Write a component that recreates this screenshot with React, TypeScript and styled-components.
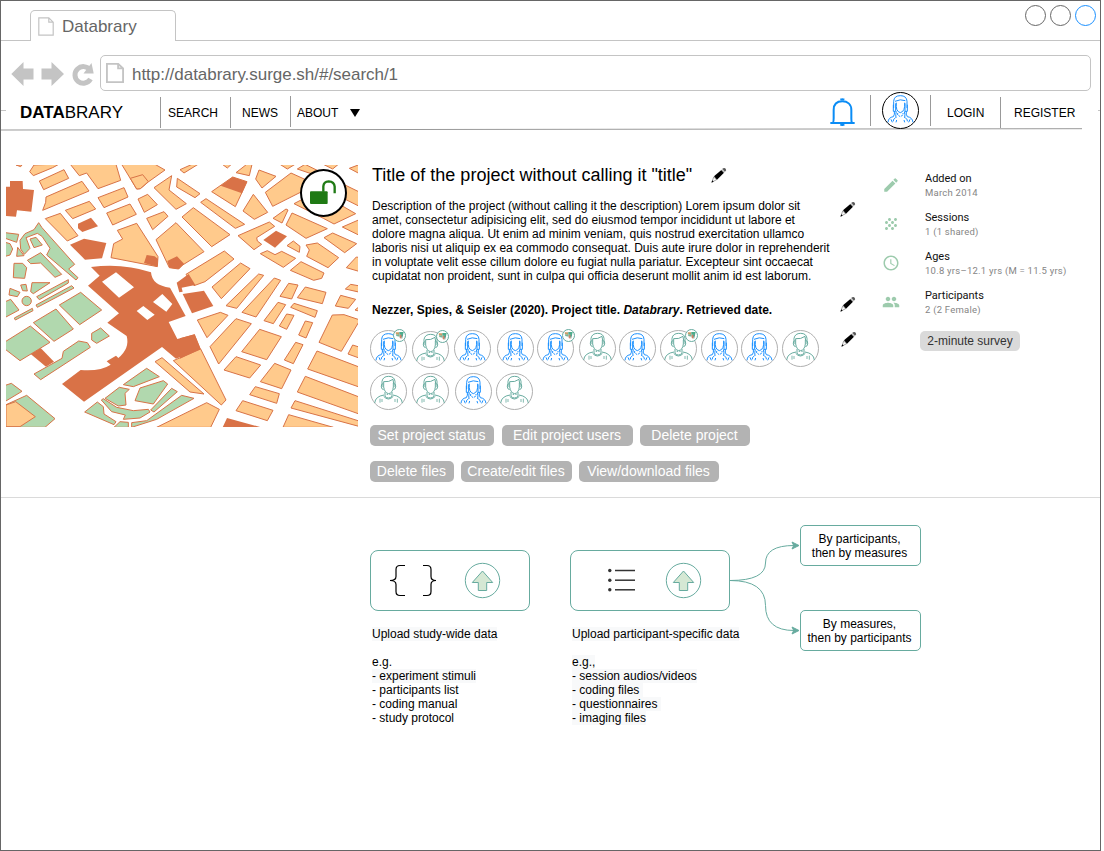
import React from 'react';
import styled, { createGlobalStyle } from 'styled-components';
import { MdAccessTime, MdEdit, MdGrain, MdPeople } from 'react-icons/md';

const GlobalStyle = createGlobalStyle`
  *, *::before, *::after { box-sizing: border-box; }
  body {
    margin: 0;
    background: #fff;
    color: #000;
    font-family: "Liberation Sans", Arial, Helvetica, sans-serif;
    font-size: 12px;
    line-height: 14px;
  }
  svg { display: block; flex: none; }
`;

const BLUE = '#1a90ff';
const TEAL = '#67ab9f';
const CHROME = '#c4c4c4';

/* ---------- browser frame ---------- */

const Frame = styled.div`
  width: 1101px;
  height: 851px;
  border: 1px solid #666;
  display: flex;
  flex-direction: column;
  overflow: hidden;
`;

const TabStrip = styled.div`
  height: 40px;
  flex: none;
  display: flex;
  justify-content: space-between;
  padding: 9px 4px 0 29px;
  border-bottom: 1px solid ${CHROME};
`;

const Tab = styled.div`
  width: 146px;
  height: 31px;
  padding: 1px 0 0 7px;
  display: flex;
  align-items: center;
  gap: 8px;
  border: 1px solid ${CHROME};
  border-bottom: 0;
  border-radius: 5px 5px 0 0;
  background: #fff;
  color: #666;
  font-size: 17px;
`;

const WindowButtons = styled.div`
  display: flex;
  gap: 4px;
  margin-top: -5px;
`;

const WindowButton = styled.span<{ $color: string }>`
  width: 21px;
  height: 21px;
  border: 1px solid ${(p) => p.$color};
  border-radius: 50%;
`;

const Toolbar = styled.div`
  height: 50px;
  flex: none;
  display: flex;
  align-items: center;
  padding: 14px 9px 0 10px;
`;

const AddressBar = styled.div`
  flex: 1;
  height: 36px;
  margin-left: 6px;
  padding-left: 5px;
  display: flex;
  align-items: center;
  gap: 8px;
  border: 1px solid ${CHROME};
  border-radius: 5px;
  color: #666;
  font-size: 17px;
  letter-spacing: -0.03px;
`;

const Address = styled.span`
  padding-top: 3px;
`;

/* ---------- site navigation ---------- */

const Nav = styled.nav`
  height: 37px;
  flex: none;
  display: flex;
  align-items: flex-start;
`;

const Tick = styled.span<{ $width: number }>`
  width: ${(p) => p.$width}px;
  height: 1px;
  margin-top: 19px;
  background: ${CHROME};
`;

const Brand = styled.div`
  width: 140px;
  margin: 12px 0 0 14px;
  font-size: 17px;
  line-height: 20px;
  white-space: nowrap;
`;

const NavItem = styled.a<{ $width: number; $pad: number; $top?: number }>`
  width: ${(p) => p.$width}px;
  height: 31px;
  margin-top: ${(p) => p.$top ?? 6}px;
  padding: ${(p) => 15 - (p.$top ?? 6)}px 0 0 ${(p) => p.$pad}px;
  display: flex;
  gap: 12px;
  border-left: 1px solid #999;
  line-height: 14px;
`;

const NavSpacer = styled.div`
  flex: 1;
`;

const IconSlot = styled.div<{ $width: number; $top: number; $pad: number; $divider?: boolean }>`
  width: ${(p) => p.$width}px;
  height: 31px;
  margin-top: 4px;
  padding: 0 0 0 ${(p) => p.$pad}px;
  border-left: ${(p) => (p.$divider ? '1px solid #999' : '0')};
  > svg, > span { margin-top: ${(p) => p.$top}px; }
`;

const Caret = styled.svg`
  margin-top: 3px;
`;

/* ---------- project summary ---------- */

const Project = styled.section`
  height: 367px;
  flex: none;
  display: grid;
  grid-template-columns: 352px 510px 1fr;
  padding-left: 5px;
  border-bottom: 1px solid #dadada;
`;

const MapPane = styled.div`
  position: relative;
  width: 352px;
  height: 262px;
  margin-top: 34px;
`;

const LockBadge = styled.div`
  position: absolute;
  left: 294px;
  top: 4px;
  width: 47px;
  height: 48px;
  border: 2px solid #000;
  border-radius: 50%;
  background: #fff;
`;

const Details = styled.div`
  padding: 34px 0 0 12px;
`;

const Line = styled.div<{ $height: number; $top?: number; $penTop: number; $text?: boolean }>`
  display: flex;
  justify-content: space-between;
  width: 486px;
  height: ${(p) => p.$height}px;
  margin-top: ${(p) => p.$top ?? 0}px;
  padding-left: ${(p) => (p.$text ? 2 : 0)}px;
  > svg { margin-top: ${(p) => p.$penTop}px; }
`;

const TitleLine = styled(Line)`
  width: 357px;
`;

const AvatarLine = styled(Line)`
  width: 487px;
`;

const Title = styled.h1`
  margin: 0;
  font-size: 18px;
  font-weight: 400;
  line-height: 20px;
  white-space: nowrap;
`;

const Copy = styled.p<{ $bold?: boolean }>`
  margin: 0;
  font-weight: ${(p) => (p.$bold ? 700 : 400)};
  white-space: pre;
`;

const AvatarRow = styled.div`
  display: flex;
`;

const AvatarRing = styled.span<{ $gap?: number; $drop?: number; $dark?: boolean }>`
  position: relative;
  display: block;
  width: 37px;
  height: 37px;
  margin-left: ${(p) => p.$gap ?? 0}px;
  top: ${(p) => p.$drop ?? 0}px;
  border: 1px solid ${(p) => (p.$dark ? '#000' : '#b0b0b0')};
  border-radius: 50%;
  background: #fff;
  > svg { margin: -1px; }
`;

const Flag = styled.span<{ $left: number }>`
  position: absolute;
  left: ${(p) => p.$left - 7.5}px;
  top: -2px;
  width: 13px;
  height: 13px;
  border: 1px solid ${TEAL};
  border-radius: 50%;
  background: #fff;
`;

const ButtonRow = styled.div<{ $top: number }>`
  display: flex;
  gap: 7px;
  margin-top: ${(p) => p.$top}px;
`;

const Button = styled.button<{ $width: number; $gap?: number }>`
  width: ${(p) => p.$width}px;
  height: 21px;
  margin: 0 ${(p) => p.$gap ?? 0}px 0 0;
  padding: 0 1px 0 0;
  border: 0;
  border-radius: 5px;
  background: #b3b3b3;
  color: #fff;
  font: 14px/21px "Liberation Sans", Arial, sans-serif;
  white-space: nowrap;
`;

const Facts = styled.div`
  padding: 40px 0 0 13px;
`;

const Fact = styled.div`
  display: grid;
  grid-template-columns: 44px 1fr;
  height: 39px;
  font-family: Roboto, sans-serif;
  > svg { width: 18px; height: 18px; margin: 5px 0 0 1px; color: #9dcbad; }
`;

const FactName = styled.div`
  color: #111;
  font-size: 11px;
  line-height: 15px;
  letter-spacing: -0.02px;
`;

const FactValue = styled.div`
  color: #858585;
  font-size: 9.5px;
  line-height: 14px;
  letter-spacing: 0.24px;
`;

const Survey = styled.button`
  width: 100px;
  height: 20px;
  margin: 4px 0 0 39px;
  padding: 0;
  border: 0;
  border-radius: 5px;
  background: #dadada;
  color: #333;
  font: 12px/20px "Liberation Sans", Arial, sans-serif;
  display: block;
`;

/* ---------- upload section ---------- */

const Uploads = styled.section`
  display: flex;
  padding: 27px 0 0 369px;
`;

const UploadColumn = styled.div<{ $gap?: number }>`
  width: 160px;
  margin: 25px ${(p) => p.$gap ?? 0}px 0 0;
`;

const UploadCard = styled.div`
  width: 160px;
  height: 61px;
  border: 1px solid ${TEAL};
  border-radius: 8px;
  > svg { margin: -1px; }
`;

const UploadCopy = styled.div`
  padding: 16px 0 0 2px;
  white-space: pre;
`;

const Mark = styled.span`
  background: #f8f9fa;
`;

const Choices = styled.div`
  display: flex;
  flex-direction: column;
  gap: 44px;
`;

const Choice = styled.div`
  width: 121px;
  height: 41px;
  padding: 6px 2px 0 0;
  border: 1px solid ${TEAL};
  border-radius: 5px;
  text-align: center;
  white-space: nowrap;
`;

/* ---------- drawings ---------- */

const PageIcon = ({ width, height, stroke }: { width: number; height: number; stroke: number }) => (
  <svg width={width} height={height} viewBox="0 0 16 19" preserveAspectRatio="none" fill="none" stroke={CHROME} strokeWidth={stroke}>
    <path d="M.8.8h10l4.4 4.4v13H.8z M10.8.8v4.4h4.4" />
  </svg>
);

const Pencil = () => (
  <svg width="16" height="16" viewBox="0 0 48 48">
    <path d="M8 30 3 45l14-7z" fill="#fff" stroke="#777" strokeWidth="2" />
    <path d="m4 40-3 7 7-3z" fill="#000" />
    <path d="M9 28 31 9l8 8-21 21z" fill="#000" />
    <path d="m31 9 3-3 8 8-3 3z" fill="#bbb" />
    <path d="M34 5q6-4 10 0t-2 9z" fill="#555" />
  </svg>
);

const Bell = () => (
  <svg width="25" height="28" viewBox="0 0 75 84" fill="none" stroke="#0a8cf5" strokeWidth="6">
    <path d="M9 73q2-2 2-12V36C11 18 22 10 37 10s27 8 27 26v26q0 10 2 12" />
    <path d="M1 75h73" strokeWidth="6" />
    <path d="M31 5q6-3 12 0M31 79q6 4 12 0" />
  </svg>
);

const WomanArt = () => (
  <svg width="37" height="37" viewBox="0 0 111 111" fill="none" stroke={BLUE} strokeWidth="3">
    <path d="M35 48V28q1-17 20-17t20 17v20" />
    <path d="M39 28q16-8 31-2" />
    <path d="M43 32q-3 26 12 30 15-4 13-30" />
    <path d="M34 38v20h7V34M76 38v20h-7V34" />
    <path d="M37 58q2 9-3 16M73 58q-2 9 3 16M43 58q-3 10-1 20M67 58q3 10 1 20" />
    <path d="M47 63v6l8 5 8-5v-6" strokeDasharray="6 3" />
    <path d="M34 74Q19 76 18 91M76 74q15 2 17 17" />
    <path d="M40 78q-8 4-6 10M70 78q8 4 6 10" />
    <path d="M27 82l4 9M44 84l-2 7M66 84l2 7M84 82l-4 9" />
  </svg>
);

const ManArt = () => (
  <svg width="37" height="37" viewBox="0 0 111 111" fill="none" stroke={TEAL} strokeWidth="3">
    <path d="M36 42V25Q39 10 56 10t19 15v17" />
    <path d="M41 26q16 2 28-7l2 13" />
    <path d="M41 26v16q3 18 15 20 12-2 14-20V30" />
    <path d="M39 32q-6 0-5 9 0 8 7 9M72 32q6 0 5 9 0 8-7 9" />
    <path d="M45 57v13q10 10 21 0V57" />
    <path d="M41 70q14 16 29 0" />
    <path d="M42 66Q16 70 14 90M69 66q26 4 28 24" />
    <path d="M30 77v12M36 78v9M75 78v9M82 77v12" strokeWidth="2.5" />
    <path d="M50 64h4M58 64h4" />
  </svg>
);

const FlagArt = () => (
  <svg width="11" height="11" viewBox="0 0 33 33">
    <path d="M5 7l11 0-1 8-9-2z" fill="#c99d68" />
    <path d="M16 6h13l-2 9-11-1z" fill="#4cac8b" />
    <path d="M6 13l11 1v6l-10-2z" fill="#76b69a" />
    <path d="M17 14l8 1-3 11-5-2z" fill="#d08467" />
    <path d="M22 14l5 1-3 12z" fill="#3f9b8d" />
  </svg>
);

const UploadArrow = ({ cx }: { cx: number }) => (
  <g stroke={TEAL}>
    <circle cx={cx} cy="580.5" r="17.2" fill="#fff" />
    <path transform={`translate(${cx} 0)`} d="M0 571 10.2 582.5H4.2V590.5H-4.2V582.5H-10.2z" fill="#d5e8d4" />
  </g>
);

const BracesArt = () => (
  <svg width="160" height="61" viewBox="370 550 160 61" fill="none">
    <path d="M405 565.5h-5q-4 0-4 4v7q0 4-6 4 6 0 6 4v7q0 4 4 4h5M423 565.5h4q4 0 4 4v7q0 4 5 4-5 0-5 4v7q0 4-4 4h-4" stroke="#000" strokeWidth="1.2" />
    <UploadArrow cx={482.5} />
  </svg>
);

const ListArt = () => (
  <svg width="160" height="61" viewBox="570 550 160 61" fill="none">
    {[570.5, 580.2, 589.8].map((y) => (
      <g key={y}>
        <circle cx="609.8" cy={y} r="1.7" fill="#333" />
        <path d={`M615 ${y}h20`} stroke="#333" strokeWidth="1.5" />
      </g>
    ))}
    <UploadArrow cx={683.5} />
  </svg>
);

const Connector = () => (
  <svg width="70" height="127" viewBox="730 525 70 127" fill="none" stroke={TEAL}>
    <path d="M730 580.5Q765.5 580.5 765.5 563T794 545.5M730 580.5Q765.5 580.5 765.5 605.5T794 630.5" />
    <path d="M799 545.5 792 549l1.7-3.5L792 542zM799 630.5 792 634l1.7-3.5L792 627z" fill={TEAL} />
  </svg>
);

/* City map: each list holds the outlines of one kind of block, by quadrant. */
type Blocks = { x: number; y: number; orange: string[]; green: string[]; rust: string[] };

const quadrants: Blocks[] = [
  {
    x: 0, y: 0,
    orange: [
      '48,30 66,30 62,35', '102,30 178,27 158,38 100,62 89,50', '118,78 192,44 206,70 131,104',
      '138,126 246,79 267,108 128,166 137,142', '211,28 348,28 362,76 294,101 260,54 238,62',
      '294,128 372,98 384,126 312,158', '196,166 268,139 287,162 218,191', '320,174 390,147 409,178 338,210',
      '136,191 181,175 234,242 202,258', '365,28 465,28 495,45 446,80 421,101 410,102', '391,70 428,59 445,80 421,101 410,102',
      '540,44 576,28 594,28 552,54', '462,98 515,62 507,105 559,146 528,163', '532,70 600,116 585,128 530,96',
      '414,132 443,118 472,149 433,172', '440,190 492,170 504,184 458,224', '546,186 580,158 690,239 635,275',
      '352,226 410,205 474,305 472,335 333,308 341,266 368,252', '468,254 528,203 612,290 548,330 536,342 508,338',
    ],
    green: [
      '60,256 75,236 102,224 116,203 126,218 224,328 206,342 234,368 228,375 140,300 150,280 126,244 112,235 78,248 90,280 73,298 62,282',
      '90,252 108,247 127,270 102,278', '16,233 56,238 50,262 16,250', '16,262 30,266 38,282 30,300 16,304', '53,277 72,302 50,304',
      '82,316 122,293 185,358 165,367 122,324 92,326', '42,325 68,325 80,338 74,370 40,368', '30,400 60,412 52,425 27,420',
      '62,390 78,388 82,408 68,407', '96,383 150,383 100,416 92,410', '110,425 205,374 205,384 118,434', '108,450 215,392 222,399 112,457',
    ],
    rust: [
      '30,78 68,78 69,102 102,105 94,170 51,166 48,185 16,183 16,95 30,95', '234,206 273,188 294,214 247,231 234,220',
      '210,269 252,251 319,264 306,310 255,314', '440,300 464,304 474,312 472,335 432,324', '502,318 531,304 552,326 536,342 508,338',
    ],
  },
  {
    x: 0, y: 405,
    orange: ['465,215 486,203 612,312 570,306', '520,212 602,177 678,330 664,345', '470,412 620,338 658,358 632,412'],
    green: [
      '16,35 32,28 57,60 16,82', '43,84 97,55 99,62 46,90', '178,45 242,7 305,60 239,104', '100,98 168,57 220,117 162,154',
      '16,155 91,108 150,157 60,212 16,178', '102,252 186,205 190,184 236,153 262,158 271,172 122,269',
      '275,130 302,114 328,138 290,160 275,150', '16,286 34,280 66,304 16,334', '16,345 80,316 165,386 135,412 16,412',
      '370,284 440,235 478,260 400,290', '420,294 490,272 503,282 460,342 405,332', '315,325 358,292 388,298 375,310 378,345 355,348',
      '304,330 310,326 350,352 400,362 445,358 450,366 420,384 370,388 376,375 335,365', '254,366 292,336 310,350 312,372 348,395 342,404',
      '452,360 515,295 532,305 462,366', '342,412 360,395 385,397 385,412', '395,398 440,392 545,316 582,325 470,388 395,412',
    ],
    rust: [],
  },
  {
    x: 540, y: 0,
    orange: [
      '127,28 154,28 142,39', '168,53 200,28 216,28 208,62', '300,28 345,28 322,42', '237,45 288,64 246,99 227,72',
      '256,112 333,54 390,80 375,105 278,154', '352,42 375,28 420,50 405,60', '430,28 475,28 458,42', '508,40 540,28 540,57',
      '495,90 540,112 540,155 490,130', '342,146 365,134 400,140 430,120 527,176 462,207 430,190', '95,110 158,66 201,80 166,155',
      '62,142 78,131 194,208 166,220', '189,168 220,118 263,172 223,193', '279,190 318,162 324,165 306,204',
      '318,210 336,174 442,221 378,250', '487,216 540,193 540,242', '174,242 268,201 284,214 230,248 232,258 245,268 222,284',
      '321,272 340,258 360,274 358,292', '432,248 458,234 530,266 494,293', '378,270 412,264 476,308 444,338 380,304 388,285',
      '241,296 262,287 285,299 305,289 347,310 310,337', '331,346 363,320 432,354 425,370 401,376', '499,338 529,306 540,308 540,350',
      '18,358 133,288 162,312 75,380 42,392', '96,396 182,324 210,341 124,431', '138,452 236,357 251,361 170,460',
      '186,472 283,369 302,376 228,486', '300,424 326,385 354,390 335,432', '352,428 376,396 438,412 427,446', '496,402 512,388 540,393 540,412',
    ],
    green: [],
    rust: [
      '122,92 158,66 201,80 186,115', '250,255 288,227 321,244 285,278', '-10,383 26,357 46,390 5,398 8,410 -2,412', '8,417 72,407 100,453 36,475',
    ],
  },
  {
    x: 540, y: 405,
    orange: [
      '482,16 527,28 505,55 466,48', '252,92 294,37 317,44 280,101', '298,108 320,72 342,76 320,118', '332,52 342,40 412,62 405,82',
      '356,135 376,93 398,98 378,144', '417,157 457,75 492,74 540,90 484,184', '52,90 121,67 144,76 81,143', '90,170 168,86 214,101 116,222',
      '185,185 239,118 304,140 260,209', '132,240 168,200 242,225 209,264', '313,210 347,157 369,164 340,221', '241,275 284,220 333,240 305,296',
      '209,314 226,290 298,311 290,340', '168,362 188,332 279,361 262,392', '383,237 411,183 540,232 540,292', '352,306 376,259 540,322 540,373',
      '333,354 345,332 540,394 540,410', '309,412 326,374 460,412', '504,192 518,165 540,172 540,205', '525,60 540,48 540,64',
    ],
    green: [],
    rust: ['128,412 141,384 244,412'],
  },
];

const CityMap = () => (
  <svg width="352" height="262" viewBox="18 30 1056 786" strokeWidth="3" stroke="#d87347">
    {/* the station complex with its courtyards */}
    <path
      d="M273 336Q370 324 453 352 456 392 510 398L557 483 506 501 532 552 584 538 602 582 528 611 486 576 252 740 186 687 242 645Q300 650 332 629L320 619 348 602 355 609Q390 580 380 543L322 503 357 475 264 392 299 362zM306 380 357 428 402 397 348 352zM459 441 499 470 517 447 487 417zM410 468 442 495 464 479 430 453z"
      fill="#d97247" fillRule="evenodd" stroke="none"
    />
    <path d="M92 597 122 579 162 620 138 635z" fill="#d97247" stroke="none" />
    {quadrants.map((q) => (
      <g key={`${q.x}-${q.y}`} transform={`translate(${q.x} ${q.y})`}>
        {q.orange.map((p) => <polygon key={p} points={p} fill="#ffca8c" />)}
        {q.green.map((p) => <polygon key={p} points={p} fill="#b1d8ae" />)}
        {q.rust.map((p) => <polygon key={p} points={p} fill="#d97247" stroke="none" />)}
      </g>
    ))}
    {/* upper end of the long block that borders the station */}
    <path d="M540 550 584 538 602 582 540 611z" fill="#d97247" stroke="none" />
    <circle cx="80" cy="438" r="14" fill="#b1d8ae" />
    <path d="M18 750 47 740 106 785 60 815H18z" fill="#ffca8c" />
  </svg>
);

const Padlock = () => (
  <svg width="44" height="44" viewBox="0 0 132 132">
    <rect x="24" y="61" width="53" height="38" rx="3" fill="#1f7a14" />
    <path d="M64 62V46q1-14 16-15 17 1 18 16v20" fill="none" stroke="#1f7a14" strokeWidth="7" />
  </svg>
);

/* ---------- data ---------- */

type Person = { kind: 'w' | 'm'; gap?: number; drop?: number; flag?: number };

const firstRow: Person[] = [
  { kind: 'w', flag: 29.3 }, { kind: 'm', gap: 5, drop: 1, flag: 30.3 }, { kind: 'w', gap: 5 }, { kind: 'w', gap: 6 },
  { kind: 'w', gap: 3, flag: 31 }, { kind: 'm', gap: 5 }, { kind: 'w', gap: 3 }, { kind: 'm', gap: 4, flag: 31 },
  { kind: 'w', gap: 4 }, { kind: 'w', gap: 3 }, { kind: 'm', gap: 4 },
];
const secondRow: Person[] = [{ kind: 'm' }, { kind: 'm', gap: 5 }, { kind: 'w', gap: 6 }, { kind: 'm', gap: 4 }];

const facts = [
  { icon: MdEdit, name: 'Added on', value: 'March 2014' },
  { icon: MdGrain, name: 'Sessions', value: '1 (1 shared)' },
  { icon: MdAccessTime, name: 'Ages', value: '10.8 yrs–12.1 yrs (M = 11.5 yrs)' },
  { icon: MdPeople, name: 'Participants', value: '2 (2 Female)' },
];

const description = `Description of the project (without calling it the description) Lorem ipsum dolor sit
amet, consectetur adipisicing elit, sed do eiusmod tempor incididunt ut labore et
dolore magna aliqua. Ut enim ad minim veniam, quis nostrud exercitation ullamco
laboris nisi ut aliquip ex ea commodo consequat. Duis aute irure dolor in reprehenderit
in voluptate velit esse cillum dolore eu fugiat nulla pariatur. Excepteur sint occaecat
cupidatat non proident, sunt in culpa qui officia deserunt mollit anim id est laborum.`;

const Avatars = ({ people }: { people: Person[] }) => (
  <AvatarRow>
    {people.map((p, i) => (
      <AvatarRing key={i} $gap={p.gap} $drop={p.drop}>
        {p.kind === 'w' ? <WomanArt /> : <ManArt />}
        {p.flag && <Flag $left={p.flag}><FlagArt /></Flag>}
      </AvatarRing>
    ))}
  </AvatarRow>
);

export default function App() {
  return (
    <>
      <GlobalStyle />
      <Frame>
        <TabStrip>
          <Tab><PageIcon width={16} height={19} stroke={1.2} /><span>Databrary</span></Tab>
          <WindowButtons>
            <WindowButton $color="#666" />
            <WindowButton $color="#666" />
            <WindowButton $color={BLUE} />
          </WindowButtons>
        </TabStrip>
        <Toolbar>
          <svg width="83" height="28" viewBox="11 60 83 28" fill={CHROME}>
            <path d="M11.3 75 23.5 63v6.5h10v11h-10V87zM64 75 51.5 63v6.5h-10v11h10V87z" />
            <path d="M90 71A8.3 8.3 0 1 0 90.5 80" fill="none" stroke={CHROME} strokeWidth="5" />
            <path d="M91.5 64 93.7 74.5H83.5z" />
          </svg>
          <AddressBar><PageIcon width={18} height={20} stroke={1.7} /><Address>http://databrary.surge.sh/#/search/1</Address></AddressBar>
        </Toolbar>
        <Nav>
          <Tick $width={5} />
          <Brand><b>DATA</b>BRARY</Brand>
          <NavItem $width={70} $pad={7}>SEARCH</NavItem>
          <NavItem $width={60} $pad={11}>NEWS</NavItem>
          <NavItem $width={90} $pad={6} $top={5}>
            ABOUT
            <Caret width="10" height="8" viewBox="0 0 10 8"><path d="M0 0h10L5 8z" /></Caret>
          </NavItem>
          <NavSpacer />
          <IconSlot $width={40} $top={3} $pad={0}><Bell /></IconSlot>
          <IconSlot $width={60} $top={-3} $pad={11} $divider><AvatarRing $dark><WomanArt /></AvatarRing></IconSlot>
          <NavItem $width={70} $pad={16} $top={4}>LOGIN</NavItem>
          <NavItem $width={98} $pad={13}>REGISTER</NavItem>
          <Tick $width={2} />
        </Nav>
        <svg width="1099" height="3" viewBox="1 128 1099 3">
          <path d="M1 130 1082 128.7" stroke="#999" />
        </svg>

        <Project>
          <MapPane>
            <CityMap />
            <LockBadge><Padlock /></LockBadge>
          </MapPane>
          <Details>
            <TitleLine $height={20} $penTop={2} $text>
              <Title>Title of the project without calling it "title"</Title>
              <Pencil />
            </TitleLine>
            <Line $height={84} $top={14} $penTop={2} $text>
              <Copy>{description}</Copy>
              <Pencil />
            </Line>
            <Line $height={14} $top={20} $penTop={-7} $text>
              <Copy $bold>Nezzer, Spies, &amp; Seisler (2020). Project title. <i>Databrary</i>. Retrieved date.</Copy>
              <Pencil />
            </Line>
            <AvatarLine $height={43} $top={13} $penTop={1}>
              <Avatars people={firstRow} />
              <Pencil />
            </AvatarLine>
            <Avatars people={secondRow} />
            <ButtonRow $top={15}>
              <Button $width={124} $gap={1}>Set project status</Button>
              <Button $width={131}>Edit project users</Button>
              <Button $width={110}>Delete project</Button>
            </ButtonRow>
            <ButtonRow $top={15}>
              <Button $width={84}>Delete files</Button>
              <Button $width={111}>Create/edit files</Button>
              <Button $width={140}>View/download files</Button>
            </ButtonRow>
          </Details>
          <Facts>
            {facts.map(({ icon: Icon, name, value }) => (
              <Fact key={name}>
                <Icon />
                <div>
                  <FactName>{name}</FactName>
                  <FactValue>{value}</FactValue>
                </div>
              </Fact>
            ))}
            <Survey>2-minute survey</Survey>
          </Facts>
        </Project>

        <Uploads>
          <UploadColumn $gap={40}>
            <UploadCard><BracesArt /></UploadCard>
            <UploadCopy>
              <Mark>Upload study-wide data</Mark>{'\n\n'}e.g.{'\n'}
              <Mark>- experiment stimuli</Mark>{'\n'}- participants list{'\n'}- coding manual{'\n'}- study protocol
            </UploadCopy>
          </UploadColumn>
          <UploadColumn>
            <UploadCard><ListArt /></UploadCard>
            <UploadCopy>
              <Mark>Upload participant-specific data{'\n\n'}e.g.,{'\n'}- session audios/videos{'\n'}- coding files {'\n'}- questionnaires {'\n'}- imaging files</Mark>
            </UploadCopy>
          </UploadColumn>
          <Connector />
          <Choices>
            <Choice>By participants,<br />then by measures</Choice>
            <Choice>By measures,<br />then by participants</Choice>
          </Choices>
        </Uploads>
      </Frame>
    </>
  );
}
